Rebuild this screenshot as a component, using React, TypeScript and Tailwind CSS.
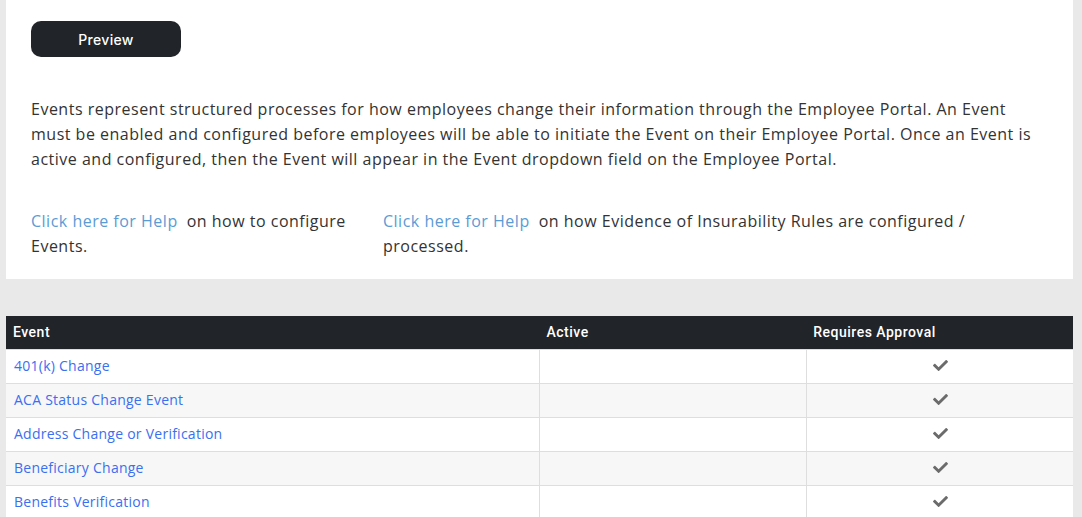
import React from "react";
import { FaCheck } from "react-icons/fa";

const events = [
  "401(k) Change",
  "ACA Status Change Event",
  "Address Change or Verification",
  "Beneficiary Change",
  "Benefits Verification",
];

const bodyFont = "font-['Open_Sans',sans-serif]";

export default function App() {
  return (
    <div className={`min-h-screen bg-[#e9e9e9] pl-[6px] pr-[9px] ${bodyFont}`}>
      {/* Intro panel */}
      <div className="bg-white px-[25px] pt-[21px] pb-[20px]">
        <button className="w-[150px] h-[36px] rounded-[10px] bg-[#212429] text-white text-[14px] font-medium tracking-[0.3px] font-['Inter',sans-serif]">
          Preview
        </button>

        <p className="mt-[40px] text-[16px] leading-[25px] tracking-[0.5px] text-[#333]">
          Events represent structured processes for how employees change their information through the Employee Portal. An Event
          must be enabled and configured before employees will be able to initiate the Event on their Employee Portal. Once an Event is
          active and configured, then the Event will appear in the Event dropdown field on the Employee Portal.
        </p>

        <div className="mt-[37px] flex text-[16px] leading-[25px] tracking-[0.5px] text-[#333]">
          <div className="w-[322px] shrink-0">
            <a className="text-[#5b9bd5] mr-[9px]">Click here for Help</a>
            <span>on how to configure</span>
            <br />
            <span>Events.</span>
          </div>
          <div className="ml-[30px] w-[620px]">
            <a className="text-[#5b9bd5] mr-[9px]">Click here for Help</a>
            <span>on how Evidence of Insurability Rules are configured /</span>
            <br />
            <span>processed.</span>
          </div>
        </div>
      </div>

      {/* Events table */}
      <table className="mt-[37px] w-full border-collapse text-[14px]">
        <thead>
          <tr className="h-[33px] bg-[#212429] text-white font-['Roboto',sans-serif] tracking-[0.5px] text-left">
            <th className="w-1/2 px-[7px] font-medium">Event</th>
            <th className="w-1/4 px-[7px] font-medium">Active</th>
            <th className="w-1/4 px-[7px] font-medium">Requires Approval</th>
          </tr>
        </thead>
        <tbody>
          {events.map((name, i) => (
            <tr key={name} className={`h-[34px] ${i % 2 === 1 ? "bg-[#f7f7f7]" : "bg-white"}`}>
              <td className="px-[8px] pb-[1px] border border-[#dedede] border-l-0 tracking-[0.25px]">
                <a className="text-[#3a6ff0]">{name}</a>
              </td>
              <td className="border border-[#dedede]"></td>
              <td className="border border-[#dedede] border-r-0">
                <div className="flex justify-center pl-[1px] pb-[1px]">
                  <FaCheck className="text-[#6b6b6b] w-[19px] h-[15px]" />
                </div>
              </td>
            </tr>
          ))}
        </tbody>
      </table>
    </div>
  );
}
